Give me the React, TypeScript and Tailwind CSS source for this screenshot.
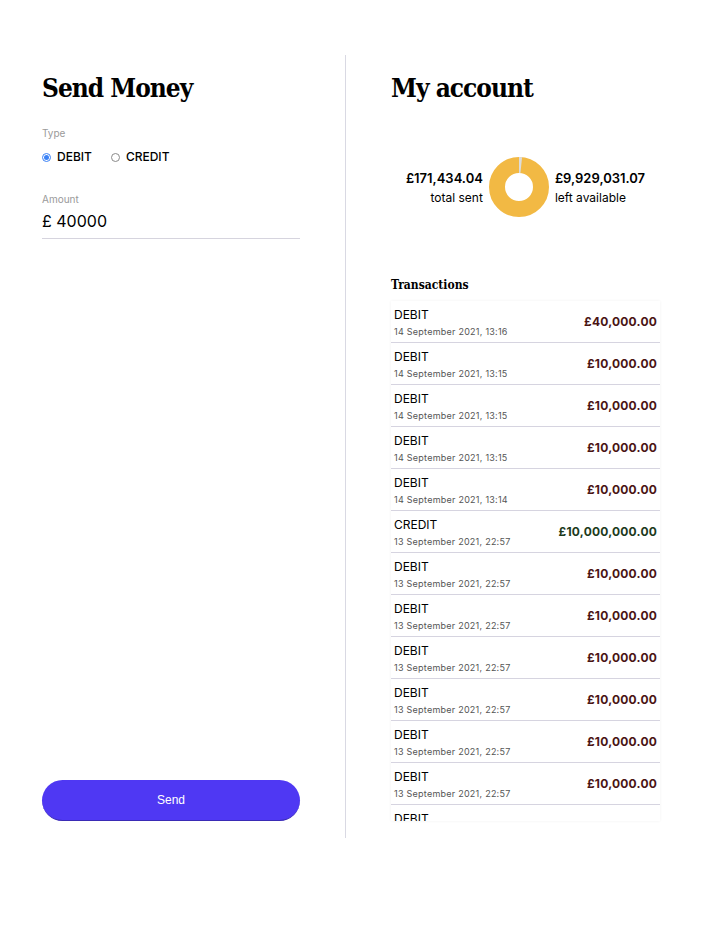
import React from 'react';

type Tx = { type: 'DEBIT' | 'CREDIT'; date: string; amount: string };

const transactions: Tx[] = [
    { type: 'DEBIT', date: '14 September 2021, 13:16', amount: '£40,000.00' },
    { type: 'DEBIT', date: '14 September 2021, 13:15', amount: '£10,000.00' },
    { type: 'DEBIT', date: '14 September 2021, 13:15', amount: '£10,000.00' },
    { type: 'DEBIT', date: '14 September 2021, 13:15', amount: '£10,000.00' },
    { type: 'DEBIT', date: '14 September 2021, 13:14', amount: '£10,000.00' },
    { type: 'CREDIT', date: '13 September 2021, 22:57', amount: '£10,000,000.00' },
    { type: 'DEBIT', date: '13 September 2021, 22:57', amount: '£10,000.00' },
    { type: 'DEBIT', date: '13 September 2021, 22:57', amount: '£10,000.00' },
    { type: 'DEBIT', date: '13 September 2021, 22:57', amount: '£10,000.00' },
    { type: 'DEBIT', date: '13 September 2021, 22:57', amount: '£10,000.00' },
    { type: 'DEBIT', date: '13 September 2021, 22:57', amount: '£10,000.00' },
    { type: 'DEBIT', date: '13 September 2021, 22:57', amount: '£10,000.00' },
    { type: 'DEBIT', date: '13 September 2021, 22:57', amount: '£10,000.00' },
];

const Donut: React.FC = () => {
    const r = 22;
    const c = 2 * Math.PI * r;
    const sent = 0.017;
    return (
        <svg width="60" height="60" viewBox="0 0 60 60" className="shrink-0">
            <circle cx="30" cy="30" r={r} fill="none" stroke="#f2b944" strokeWidth="16" />
            <circle
                cx="30"
                cy="30"
                r={r}
                fill="none"
                stroke="#dcdcdc"
                strokeWidth="16"
                strokeDasharray={`${c * sent} ${c}`}
                transform="rotate(-90 30 30)"
            />
        </svg>
    );
};

const App: React.FC = () => {
    return (
        <div className="min-h-screen bg-white text-black font-['Inter',sans-serif]">
            <div className="flex px-[42px] pt-[55px]">
                {/* Send money */}
                <div className="w-[258px] h-[783px] flex flex-col pt-[16px] pb-[17px]">
                    <h1 className="font-['DejaVu_Serif_Condensed','DejaVu_Serif',serif] font-stretch-condensed font-bold text-[26px] leading-[34px] tracking-[-1px]">
                        Send Money
                    </h1>
                    <div className="mt-[21px] text-[10px] text-[#9a9a9a] leading-[14px]">Type</div>
                    <div className="mt-[9px] flex items-center gap-[19px] text-[12px] font-medium leading-[16px]">
                        <label className="flex items-center gap-[6px]">
                            <span className="w-[9px] h-[9px] rounded-full border border-[#3b82f6] flex items-center justify-center">
                                <span className="w-[5px] h-[5px] rounded-full bg-[#3b82f6]" />
                            </span>
                            DEBIT
                        </label>
                        <label className="flex items-center gap-[6px]">
                            <span className="w-[9px] h-[9px] rounded-full border border-[#8a8a8a]" />
                            CREDIT
                        </label>
                    </div>
                    <div className="mt-[27px] text-[10px] text-[#9a9a9a] leading-[14px]">Amount</div>
                    <div className="mt-[4px] pb-[6px] border-b border-[#d6d4de] text-[16px] leading-[22px]">
                        £ 40000
                    </div>
                    <div className="flex-1" />
                    <button className="h-[41px] w-full rounded-full bg-[#4f38f3] border-b border-[#3a2bb5] text-white text-[12px] font-['Liberation_Sans',sans-serif]">
                        Send
                    </button>
                </div>

                <div className="ml-[45px] w-px h-[783px] bg-[#d9d9e3]" />

                {/* My account */}
                <div className="ml-[45px] w-[269px] pt-[16px]">
                    <h1 className="font-['DejaVu_Serif_Condensed','DejaVu_Serif',serif] font-stretch-condensed font-bold text-[26px] leading-[34px] tracking-[-1px]">
                        My account
                    </h1>
                    <div className="mt-[52px] flex items-center justify-center gap-[6px]">
                        <div className="text-right">
                            <div className="text-[13px] font-semibold leading-[18px]">£171,434.04</div>
                            <div className="mt-[3px] text-[12px] leading-[16px]">total sent</div>
                        </div>
                        <Donut />
                        <div>
                            <div className="text-[13px] font-semibold leading-[18px]">£9,929,031.07</div>
                            <div className="mt-[3px] text-[12px] leading-[16px]">left available</div>
                        </div>
                    </div>
                    <h2 className="mt-[60px] font-['DejaVu_Serif_Condensed','DejaVu_Serif',serif] font-stretch-condensed font-bold text-[12px] leading-[16px]">
                        Transactions
                    </h2>
                    <div className="mt-[8px] h-[520px] overflow-hidden shadow-[0_0_3px_rgba(0,0,0,0.06)]">
                        {transactions.map((t, i) => (
                            <div
                                key={i}
                                className="h-[42px] px-[3px] flex items-center justify-between border-b border-[#d6d4e0]"
                            >
                                <div className="pt-[2px]">
                                    <div className="text-[12px] leading-[16px]">{t.type}</div>
                                    <div className="mt-[3px] text-[9px] leading-[12px] tracking-[0.25px] text-[#555]">
                                        {t.date}
                                    </div>
                                </div>
                                <div
                                    className={
                                        t.type === 'CREDIT'
                                            ? 'text-[12px] font-bold tracking-[0.2px] text-[#1c3a1c]'
                                            : 'text-[12px] font-bold tracking-[0.2px] text-[#4a1414]'
                                    }
                                >
                                    {t.amount}
                                </div>
                            </div>
                        ))}
                    </div>
                </div>
            </div>
        </div>
    );
};

export default App;
